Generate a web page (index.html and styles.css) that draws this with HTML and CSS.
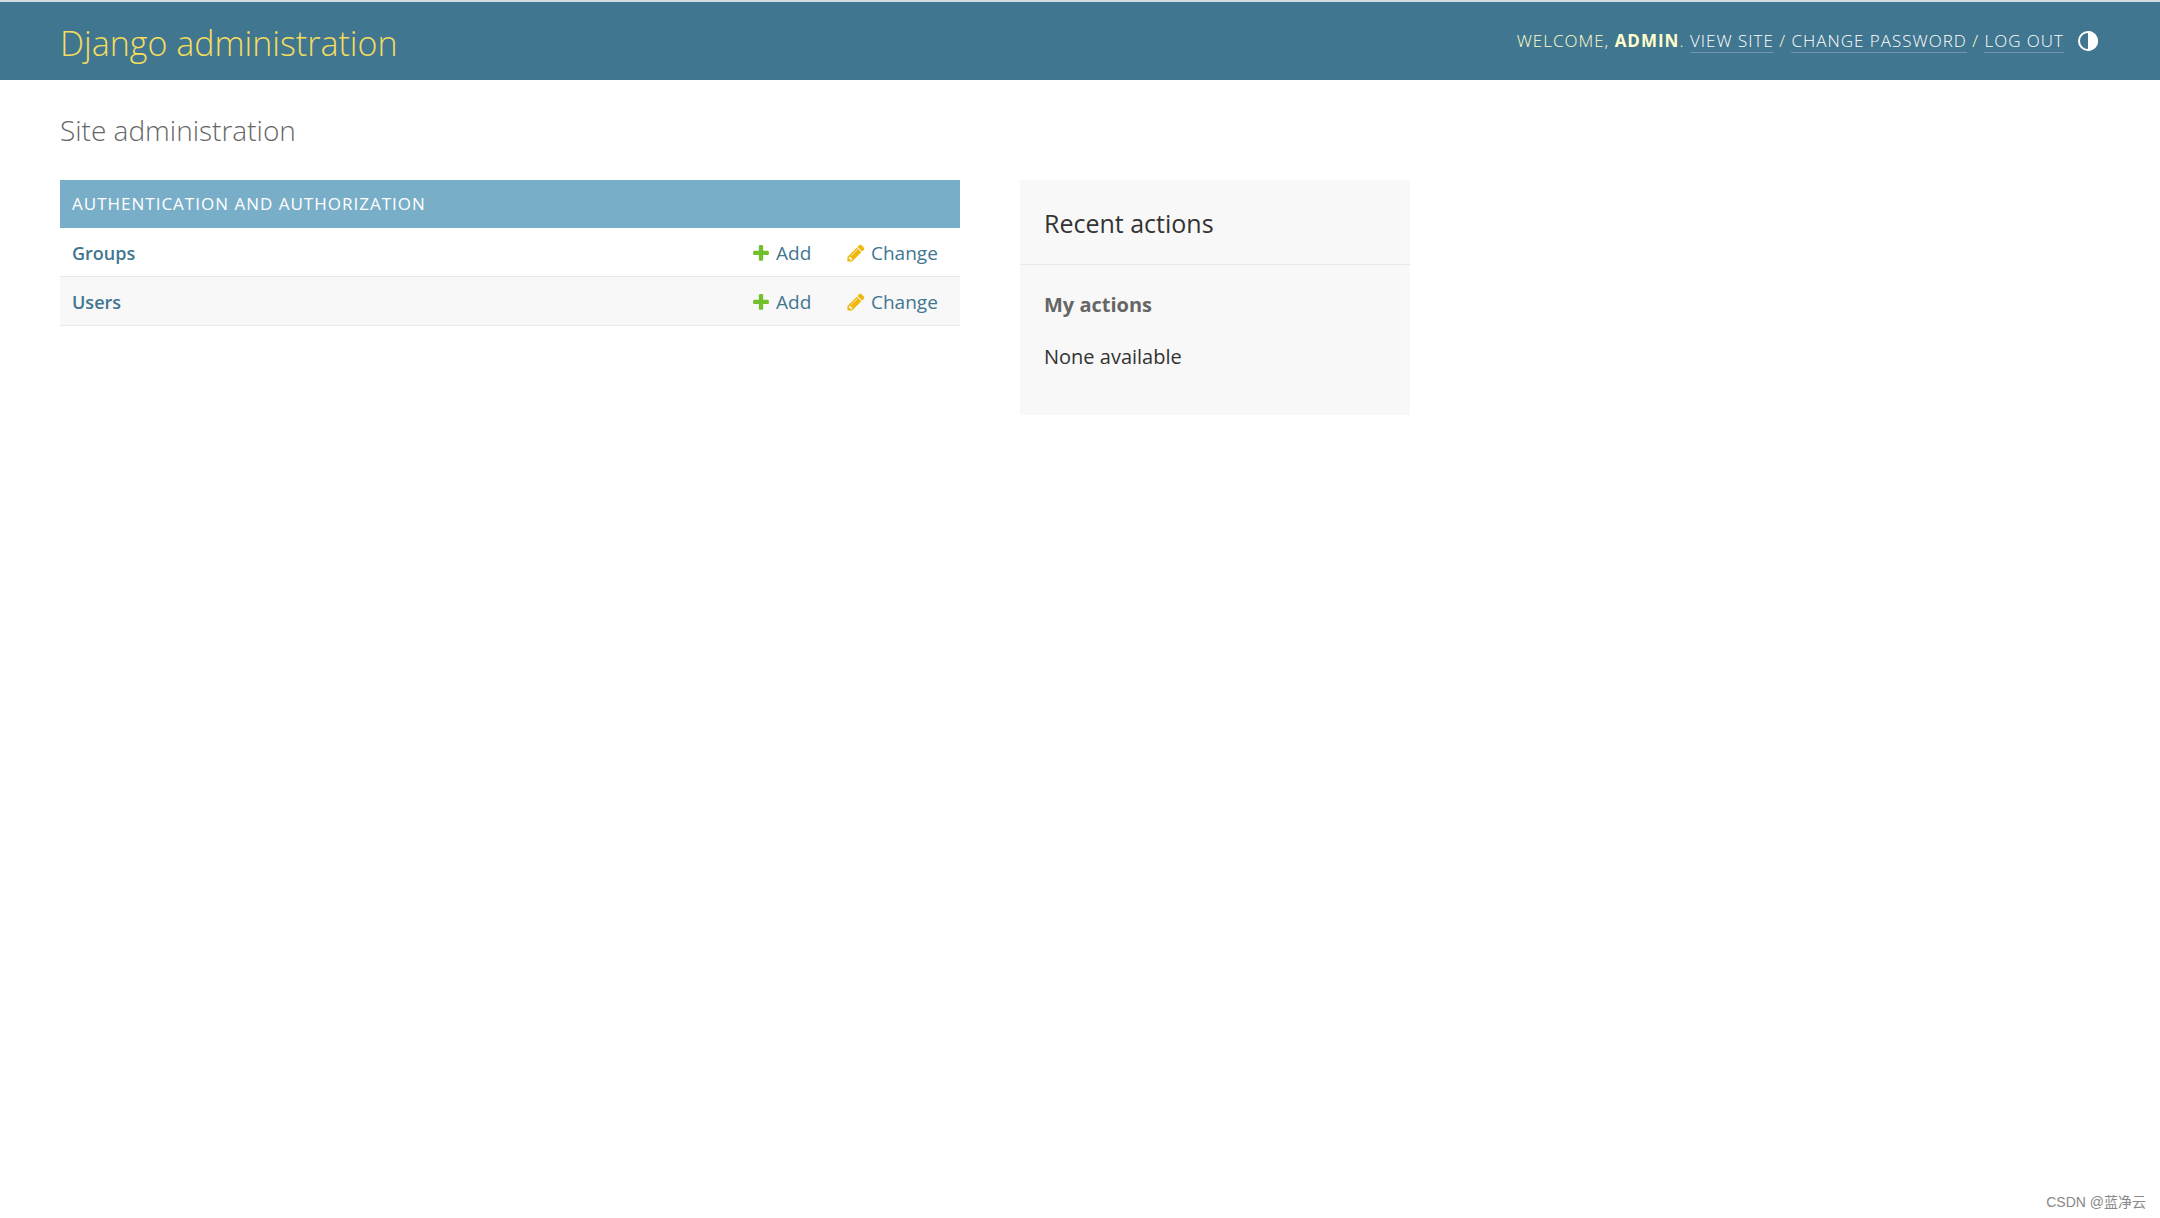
FILE: index.html
```html
<!DOCTYPE html>
<html lang="en">
<head>
<meta charset="utf-8">
<meta name="viewport" content="width=device-width, initial-scale=1">
<title>Site administration | Django site admin</title>
<link rel="stylesheet" href="styles.css">
</head>
<body>
<svg class="sprite" aria-hidden="true">
  <symbol id="icon-add" viewBox="0 0 1792 1792"><path fill="#70bf2b" d="M1600 796v192q0 40-28 68t-68 28h-416v416q0 40-28 68t-68 28h-192q-40 0-68-28t-28-68v-416h-416q-40 0-68-28t-28-68v-192q0-40 28-68t68-28h416v-416q0-40 28-68t68-28h192q40 0 68 28t28 68v416h416q40 0 68 28t28 68z"/></symbol>
  <symbol id="icon-change" viewBox="0 0 1792 1792"><path fill="#efb80b" d="M491 1536l91-91-235-235-91 91v107h128v128h107zm523-928q0-22-22-22-10 0-17 7l-542 542q-7 7-7 17 0 22 22 22 10 0 17-7l542-542q7-7 7-17zm-54-192l416 416-832 832h-416v-416zm683 96q0 53-37 90l-166 166-416-416 166-165q36-38 90-38 53 0 91 38l235 234q37 39 37 91z"/></symbol>
</svg>
<header class="header">
  <h1 class="branding"><a href="#">Django administration</a></h1>
  <div class="user-tools">
    <div>Welcome, <strong>admin</strong>. <a href="#">View site</a> / <a href="#">Change password</a> / <a href="#">Log out</a></div>
    <button class="theme-toggle" type="button" aria-label="Toggle theme">
      <svg viewBox="0 0 20 20"><circle cx="10" cy="10" r="9" fill="none" stroke="#fff" stroke-width="2"/><path fill="#fff" d="M10 0a10 10 0 0 1 0 20z"/></svg>
    </button>
  </div>
</header>
<main class="content">
  <h2 class="page-title">Site administration</h2>
  <div class="columns">
    <table class="module">
      <caption><a href="#">Authentication and Authorization</a></caption>
      <tbody>
        <tr>
          <th scope="row"><a href="#">Groups</a></th>
          <td class="add"><a class="action" href="#"><svg><use href="#icon-add"/></svg>Add</a></td>
          <td class="change"><a class="action" href="#"><svg><use href="#icon-change"/></svg>Change</a></td>
        </tr>
        <tr>
          <th scope="row"><a href="#">Users</a></th>
          <td class="add"><a class="action" href="#"><svg><use href="#icon-add"/></svg>Add</a></td>
          <td class="change"><a class="action" href="#"><svg><use href="#icon-change"/></svg>Change</a></td>
        </tr>
      </tbody>
    </table>
    <aside class="recent">
      <h2>Recent actions</h2>
      <h3>My actions</h3>
      <p>None available</p>
    </aside>
  </div>
</main>
<div class="watermark">CSDN @蓝净云</div>
</body>
</html>
```
FILE: styles.css
```css
* {
  box-sizing: border-box;
}

body {
  margin: 0;
  min-height: 100vh;
  background: #fff;
  color: #333;
  font-family: "Open Sans", "Noto Sans", sans-serif;
  font-size: 20px;
  line-height: 24px;
}

a {
  color: #417690;
  text-decoration: none;
}

h1, h2, h3, p {
  margin: 0;
}

.sprite {
  display: none;
}

.header {
  display: flex;
  align-items: center;
  justify-content: space-between;
  height: 80px;
  padding: 0 60px;
  border-top: 2px solid #d3dbe0;
  background: #417690;
  color: #ffc;
}

.branding {
  padding-top: 4px;
  font-size: 34px;
  font-weight: 300;
  line-height: 48px;
}

.branding a {
  color: #f5dd5d;
}

.user-tools {
  display: flex;
  align-items: center;
  gap: 14px;
  font-size: 17px;
  font-weight: 300;
  letter-spacing: 1px;
  text-transform: uppercase;
}

.user-tools a {
  border-bottom: 1px solid rgba(255, 255, 255, 0.25);
  color: #fff;
}

.user-tools strong {
  font-weight: 700;
}

.theme-toggle {
  width: 22px;
  height: 20px;
  padding: 0 2px 0 0;
  border: 0;
  background: none;
  cursor: pointer;
}

.theme-toggle svg {
  display: block;
  width: 20px;
  height: 20px;
}

.content {
  padding: 30px 60px;
}

.page-title {
  margin-bottom: 30px;
  color: #666;
  font-size: 28px;
  font-weight: 300;
  line-height: 40px;
}

.columns {
  display: grid;
  grid-template-columns: minmax(0, 900px) 390px;
  align-items: start;
  gap: 60px;
}

.module {
  width: 100%;
  border-collapse: separate;
  border-spacing: 0;
  table-layout: fixed;
}

.module caption {
  padding: 12px;
  background: #79aec8;
  font-size: 17px;
  letter-spacing: 1px;
  text-align: left;
  text-transform: uppercase;
}

.module caption a {
  color: #fff;
}

.module th,
.module td {
  height: 49px;
  padding: 1px 12px 0;
  border-bottom: 1px solid #e8e8e8;
  font-size: 19px;
  text-align: left;
}

.module th {
  font-size: 18px;
  font-weight: 600;
}

.module tr:nth-child(even) {
  background: #f8f8f8;
}

.module .add {
  width: 95px;
  padding-right: 0;
}

.module .change {
  width: 126px;
  padding-right: 0;
}

.action {
  display: flex;
  align-items: center;
  gap: 5px;
}

.action svg {
  flex: none;
  width: 20px;
  height: 20px;
}

.recent {
  padding-bottom: 46px;
  background: #f8f8f8;
}

.recent h2 {
  padding: 25px 24px 23px;
  border-bottom: 1px solid #e8e8e8;
  font-size: 25px;
  font-weight: 400;
  line-height: 36px;
}

.recent h3 {
  padding: 28px 24px 0;
  color: #666;
  font-size: 20px;
  font-weight: 700;
}

.recent p {
  padding: 28px 24px 0;
}

.watermark {
  position: absolute;
  right: 14px;
  bottom: 6px;
  color: #888;
  font-family: "Liberation Sans", "Noto Sans CJK SC", sans-serif;
  font-size: 14px;
  line-height: 20px;
}
```
